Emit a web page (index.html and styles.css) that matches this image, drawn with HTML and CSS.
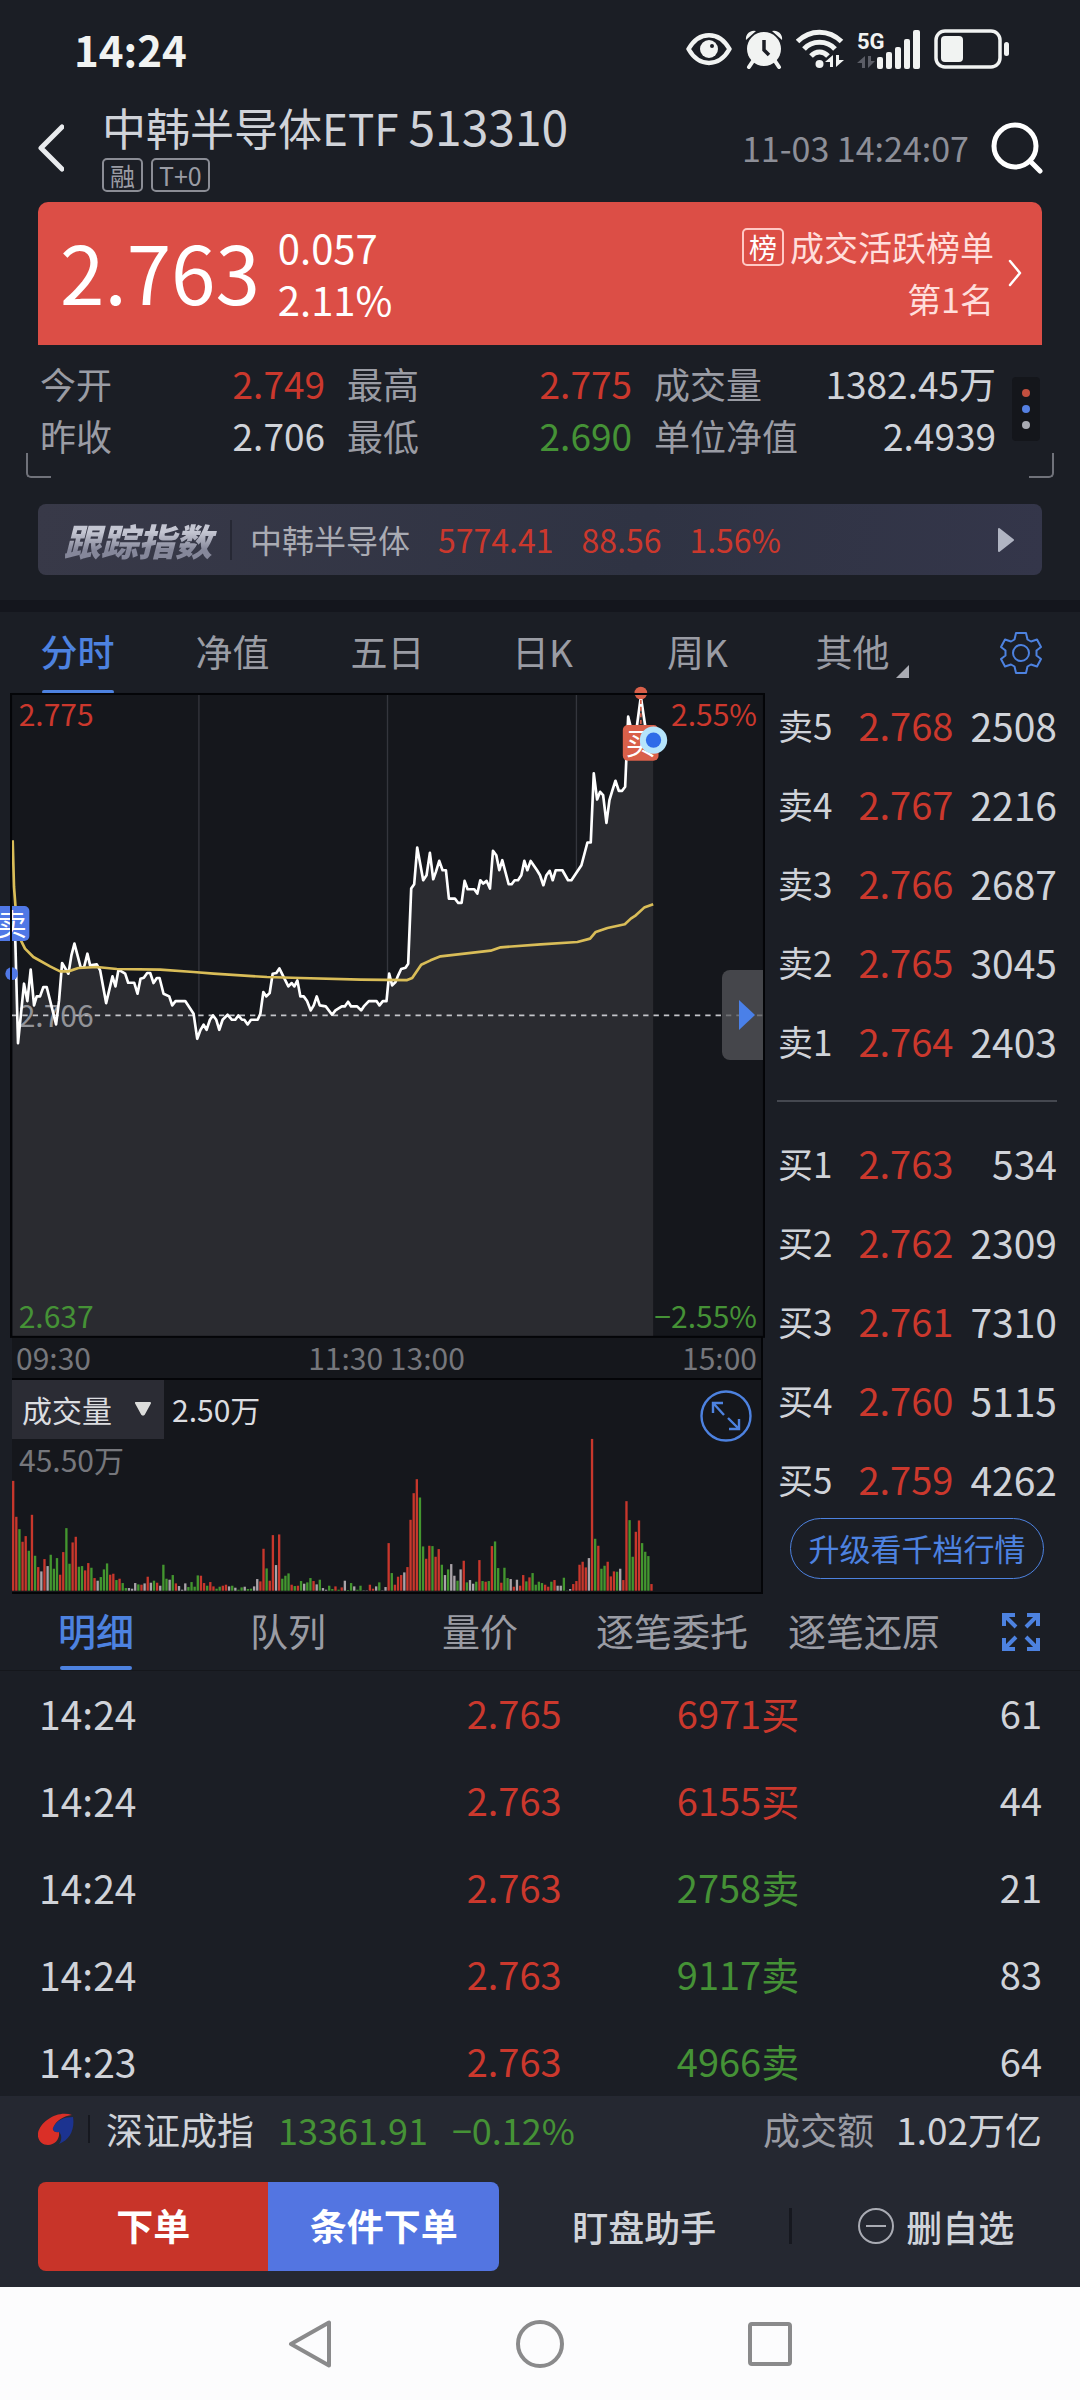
FILE: index.html
```
<!DOCTYPE html>
<html lang="zh-CN">
<head>
  <meta charset="UTF-8">
  <meta name="viewport" content="width=device-width, initial-scale=1">
  <title>中韩半导体ETF 513310</title>
  <link rel="stylesheet" href="styles.css">
</head>
<body>
  <div class="status-bar">
    <span class="clock">14:24</span>
    <div class="status-icons">
      <svg width="46" height="40" viewBox="0 0 46 40">
        <path d="M2.500 20C13 1.500 33 1.500 43.500 20C33 38.500 13 38.500 2.500 20Z" fill="none" stroke="#f1f3f2" stroke-width="4.500" stroke-linejoin="round"/>
        <circle cx="23" cy="20" r="9" fill="#f1f3f2"/>
        <circle cx="26" cy="17" r="2" fill="#1b1e25"/>
      </svg>
      <svg width="38" height="40" viewBox="0 0 38 40">
        <path d="M1 11A8 8 0 0 1 11 2ZM37 11A8 8 0 0 0 27 2Z" fill="#f1f3f2"/>
        <path d="M8 32L4 38M30 32L34 38" stroke="#f1f3f2" stroke-width="4" stroke-linecap="round"/>
        <circle cx="19" cy="20" r="17" fill="#f1f3f2"/>
        <path d="M19 11V21L24 26" fill="none" stroke="#1b1e25" stroke-width="3.500"/>
      </svg>
      <svg width="48" height="40" viewBox="0 0 48 40">
        <g fill="none" stroke="#f1f3f2" stroke-width="5">
          <path d="M1.500 12.500C14 0 33 0 45.500 12.500"/>
          <path d="M8 20C16 11 31 11 39 20"/>
          <path d="M15 27C20 21.500 27 21.500 32 27"/>
        </g>
        <circle cx="23.500" cy="35" r="4" fill="#f1f3f2"/>
        <path d="M37 38V26L29 33H34V38ZM40 26V38L48 31H43V26Z" fill="#f1f3f2"/>
      </svg>
      <svg width="64" height="40" viewBox="0 0 64 40">
        <text x="0" y="20" class="net-label">5G</text>
        <path d="M8 39V27L0 34H5V39ZM11 27V39L18 32H14V27Z" fill="#5b5d66"/>
        <g fill="#f1f3f2">
          <rect x="20" y="28" width="6" height="12" rx="2"/>
          <rect x="29" y="23" width="6" height="17" rx="2"/>
          <rect x="38" y="18" width="6" height="22" rx="2"/>
          <rect x="47" y="10" width="6" height="30" rx="2"/>
          <rect x="56" y="1" width="7" height="39" rx="2"/>
        </g>
      </svg>
      <svg width="76" height="40" viewBox="0 0 76 40">
        <rect x="2" y="2" width="64" height="36" rx="9" fill="none" stroke="#f1f3f2" stroke-width="3.500"/>
        <rect x="7" y="7" width="22" height="26" rx="4" fill="#f1f3f2"/>
        <rect x="70" y="13" width="5" height="14" rx="2.500" fill="#f1f3f2"/>
      </svg>
    </div>
  </div>

  <header class="header">
    <button class="icon-btn" aria-label="返回">
      <svg width="26" height="48" viewBox="0 0 26 48"><path d="M24 3L3 24L24 45" fill="none" stroke="#e9ebee" stroke-width="5" stroke-linecap="round" stroke-linejoin="round"/></svg>
    </button>
    <div class="heading">
      <h1>中韩半导体ETF <span class="code">513310</span></h1>
      <div class="tags">
        <span class="tag">融</span>
        <span class="tag">T+0</span>
      </div>
    </div>
    <time class="updated">11-03 14:24:07</time>
    <button class="icon-btn" aria-label="搜索">
      <svg width="52" height="52" viewBox="0 0 52 52"><g fill="none" stroke="#fff" stroke-width="5" stroke-linecap="round"><circle cx="24" cy="24" r="21"/><path d="M39 39L49 49"/></g></svg>
    </button>
  </header>

  <section class="quote">
    <div class="quote-price">2.763</div>
    <div class="quote-change">
      <div>0.057</div>
      <div>2.11%</div>
    </div>
    <a href="#rank" class="rank">
      <span class="rank-text">
        <span class="rank-line"><span class="rank-badge">榜</span>成交活跃榜单</span>
        <span class="rank-line">第1名</span>
      </span>
      <svg width="14" height="28" viewBox="0 0 14 28"><path d="M2 2L12 14L2 26" fill="none" stroke="#fff" stroke-width="2.500" stroke-linecap="round" stroke-linejoin="round"/></svg>
    </a>
  </section>

  <section class="stats">
    <dl class="stat-grid">
      <div class="stat"><dt>今开</dt><dd class="up">2.749</dd></div>
      <div class="stat"><dt>最高</dt><dd class="up">2.775</dd></div>
      <div class="stat"><dt>成交量</dt><dd>1382.45万</dd></div>
      <div class="stat"><dt>昨收</dt><dd>2.706</dd></div>
      <div class="stat"><dt>最低</dt><dd class="down">2.690</dd></div>
      <div class="stat"><dt>单位净值</dt><dd>2.4939</dd></div>
    </dl>
    <button class="more" aria-label="更多">
      <span class="dot dot-red"></span>
      <span class="dot dot-blue"></span>
      <span class="dot"></span>
    </button>
  </section>

  <a href="#index" class="index-bar">
    <span class="index-title">跟踪指数</span>
    <span class="index-name">中韩半导体</span>
    <span class="up">5774.41</span>
    <span class="up">88.56</span>
    <span class="up">1.56%</span>
    <svg class="index-arrow" width="16" height="24" viewBox="0 0 16 24"><path d="M1 1L15 12L1 23Z" fill="#b0b4c2" stroke="#b0b4c2" stroke-width="2" stroke-linejoin="round"/></svg>
  </a>

  <nav class="tabs chart-tabs">
    <button class="tab active">分时</button>
    <button class="tab">净值</button>
    <button class="tab">五日</button>
    <button class="tab">日K</button>
    <button class="tab">周K</button>
    <button class="tab tab-menu">其他</button>
    <button class="icon-btn tab-tool" aria-label="设置">
      <svg width="42" height="42" viewBox="0 0 42 42">
        <g fill="none" stroke="#4d82e0" stroke-width="2" stroke-linejoin="round">
          <path d="M16 1H26L27.500 7.500L31 9.500L37 7.500L41 15L36.500 18.500V23.500L41 27L37 34.500L31 32.500L27.500 34.500L26 41H16L14.500 34.500L11 32.500L5 34.500L1 27L5.500 23.500V18.500L1 15L5 7.500L11 9.500L14.500 7.500Z"/>
          <circle cx="21" cy="21" r="8"/>
        </g>
      </svg>
    </button>
  </nav>

  <main class="market">
    <div class="charts">
      <div class="price-chart">
        <svg class="price-svg" viewBox="36 42 2250 1926">
          <rect x="36" y="42" width="2250" height="1926" fill="#15171c"/>
          <path d="M596 42V1968M1161 42V1968M1727 42V1968" stroke="#34363d" stroke-width="4"/>
          <path id="priceArea" fill="#2a2b30"/>
          <path d="M36 1005H2286" stroke="#c4c5ca" stroke-width="5" stroke-dasharray="16 15"/>
          <text x="56" y="1040" class="chart-label flat">2.706</text>
          <path id="priceLine" class="line price-line"/>
          <path id="avgLine" class="line avg-line"/>
          <rect x="-18" y="677" width="106" height="105" rx="15" fill="#5078e6"/>
          <text x="35" y="764" class="mark-label">卖</text>
          <circle cx="35" cy="880" r="19" fill="#5078e6"/>
          <path d="M1920 60V136" stroke="#d9604a" stroke-width="5" stroke-dasharray="12 8"/>
          <circle cx="1920" cy="39" r="19" fill="#d9604a"/>
          <rect x="1866" y="135" width="107" height="107" rx="15" fill="#d9604a"/>
          <text x="1920" y="222" class="mark-label">买</text>
          <circle cx="1958" cy="180" r="41" fill="#b5e4fb"/>
          <circle cx="1958" cy="180" r="23" fill="#2f6be8"/>
          <rect x="33" y="42" width="2256" height="1926" fill="none" stroke="#040508" stroke-width="6"/>
          <text x="56" y="137" class="chart-label up">2.775</text>
          <text x="2268" y="137" class="chart-label up end">2.55%</text>
          <text x="56" y="1942" class="chart-label down">2.637</text>
          <text x="2268" y="1942" class="chart-label down end">−2.55%</text>
        </svg>
        <button class="drawer" aria-label="展开">
          <svg width="16" height="30" viewBox="0 0 16 30"><path d="M0 0L16 15L0 30Z" fill="#4a80e8"/></svg>
        </button>
      </div>
      <div class="time-axis">
        <span>09:30</span>
        <span>11:30 13:00</span>
        <span>15:00</span>
      </div>
      <div class="volume-chart">
        <svg class="volume-svg" viewBox="36 330 2250 636"></svg>
        <div class="volume-head">
          <button class="volume-pick">成交量
            <svg width="18" height="14" viewBox="0 0 18 14"><path d="M2 1H16L10 12Q9 13 8 12Z" fill="#dcdddb" stroke="#dcdddb" stroke-width="2" stroke-linejoin="round"/></svg>
          </button>
          <span>2.50万</span>
        </div>
        <div class="volume-max">45.50万</div>
        <button class="icon-btn zoom-btn" aria-label="放大">
          <svg width="52" height="52" viewBox="0 0 52 52"><g fill="none" stroke="#4d82e0" stroke-width="2.400"><circle cx="26" cy="26" r="24.500"/><path d="M24 25L14 14M13 23V13H23M28 28L39 39M39 29V39H29"/></g></svg>
        </button>
      </div>
    </div>

    <aside class="book">
      <table class="levels">
        <tr><th>卖5</th><td class="up">2.768</td><td>2508</td></tr>
        <tr><th>卖4</th><td class="up">2.767</td><td>2216</td></tr>
        <tr><th>卖3</th><td class="up">2.766</td><td>2687</td></tr>
        <tr><th>卖2</th><td class="up">2.765</td><td>3045</td></tr>
        <tr><th>卖1</th><td class="up">2.764</td><td>2403</td></tr>
      </table>
      <hr class="book-rule">
      <table class="levels">
        <tr><th>买1</th><td class="up">2.763</td><td>534</td></tr>
        <tr><th>买2</th><td class="up">2.762</td><td>2309</td></tr>
        <tr><th>买3</th><td class="up">2.761</td><td>7310</td></tr>
        <tr><th>买4</th><td class="up">2.760</td><td>5115</td></tr>
        <tr><th>买5</th><td class="up">2.759</td><td>4262</td></tr>
      </table>
      <button class="upgrade">升级看千档行情</button>
    </aside>
  </main>

  <nav class="tabs detail-tabs">
    <button class="tab active">明细</button>
    <button class="tab">队列</button>
    <button class="tab">量价</button>
    <button class="tab">逐笔委托</button>
    <button class="tab">逐笔还原</button>
    <button class="icon-btn tab-tool" aria-label="全屏">
      <svg width="38" height="38" viewBox="0 0 38 38"><path d="M14 14L2 2M2 13V2H13M24 14L36 2M25 2H36V13M14 24L2 36M2 25V36H13M24 24L36 36M36 25V36H25" fill="none" stroke="#4d82e0" stroke-width="4"/></svg>
    </button>
  </nav>

  <table class="trades">
    <tr><td>14:24</td><td class="up">2.765</td><td class="up">6971买</td><td>61</td></tr>
    <tr><td>14:24</td><td class="up">2.763</td><td class="up">6155买</td><td>44</td></tr>
    <tr><td>14:24</td><td class="up">2.763</td><td class="down">2758卖</td><td>21</td></tr>
    <tr><td>14:24</td><td class="up">2.763</td><td class="down">9117卖</td><td>83</td></tr>
    <tr><td>14:23</td><td class="up">2.763</td><td class="down">4966卖</td><td>64</td></tr>
  </table>

  <footer class="footer">
    <div class="market-index">
      <svg width="36" height="34" viewBox="0 0 36 34">
        <path d="M35 5C37 17 32 28 21 32C24 28 24 23 21 20C18 21 14 19 15 16C18 8 27 5 35 5Z" fill="#1c3390"/>
        <path d="M34 3C21-2 3 8 0 21C-1 28 4 33 10 33C17 33 22 27 21 20C18 21 14 19 15 16C18 8 26 4 34 3Z" fill="#da2f27"/>
      </svg>
      <span class="market-name">深证成指</span>
      <span class="down">13361.91</span>
      <span class="down">−0.12%</span>
      <span class="turnover"><span class="muted">成交额</span>1.02万亿</span>
    </div>
    <div class="actions">
      <div class="order-btns">
        <button class="order order-now">下单</button>
        <button class="order order-cond">条件下单</button>
      </div>
      <button class="action">盯盘助手</button>
      <button class="action action-remove">
        <svg width="36" height="36" viewBox="0 0 36 36"><g fill="none" stroke="#a9abb3" stroke-width="2"><circle cx="18" cy="18" r="17"/><path d="M8 18H28"/></g></svg>
        删自选
      </button>
    </div>
  </footer>

  <div class="system-nav">
    <button class="icon-btn" aria-label="系统返回"><svg width="48" height="48" viewBox="0 0 48 48"><path d="M43 2.500V45.500L5 24Z" fill="none" stroke="#8a8a8b" stroke-width="4" stroke-linejoin="round"/></svg></button>
    <button class="icon-btn" aria-label="主屏幕"><svg width="48" height="48" viewBox="0 0 48 48"><circle cx="24" cy="24" r="22" fill="none" stroke="#8a8a8b" stroke-width="4"/></svg></button>
    <button class="icon-btn" aria-label="最近任务"><svg width="48" height="48" viewBox="0 0 48 48"><rect x="4" y="4" width="40" height="40" rx="2" fill="none" stroke="#8a8a8b" stroke-width="4"/></svg></button>
  </div>

  <script src="chart.js"></script>
</body>
</html>
```
FILE: styles.css
```
* {
  box-sizing: border-box;
}
body {
  margin: 0;
  background: #1b1e25;
  color: #d0d3d9;
  font-family: "Noto Sans CJK SC", sans-serif;
  font-size: 36px;
  line-height: 50px;
}
button {
  padding: 0;
  border: none;
  background: none;
  color: inherit;
  font: inherit;
  cursor: pointer;
}
a {
  color: inherit;
  text-decoration: none;
}
svg {
  display: block;
}
table {
  width: 100%;
  border-collapse: collapse;
  table-layout: fixed;
}
.up {
  color: #cb382d;
  fill: #cb382d;
}
.down {
  color: #459236;
  fill: #459236;
}
.muted {
  color: #9a9ca4;
}

/* status bar */
.status-bar {
  display: flex;
  justify-content: space-between;
  align-items: center;
  padding: 24px 70px 0 74px;
}
.clock {
  color: #f1f3f2;
  font-size: 42px;
  font-weight: 700;
}
.status-icons {
  display: flex;
  gap: 13px;
}
.net-label {
  fill: #f1f3f2;
  font-family: Roboto, sans-serif;
  font-size: 22px;
  font-weight: 700;
}

/* header */
.header {
  display: flex;
  align-items: center;
  padding: 29px 37px 10px 38px;
}
.heading {
  flex: 1;
  margin-left: 38px;
}
h1 {
  margin: 0;
  font-size: 44px;
  font-weight: 400;
  line-height: 48px;
}
.code {
  font-size: 48px;
  line-height: 40px;
}
.tags {
  display: flex;
  gap: 8px;
  margin-top: 7px;
}
.tag {
  padding: 0 6px;
  border: 2px solid #8b8d95;
  border-radius: 5px;
  color: #9a9ca4;
  font-size: 25px;
  line-height: 30px;
}
.updated {
  margin-right: 22px;
  color: #8d8f98;
  font-size: 34px;
}

/* quote card */
.quote {
  display: flex;
  gap: 18px;
  margin: 0 38px;
  padding: 19px 20px 20px 22px;
  border-radius: 10px 10px 0 0;
  background: #dc4e46;
  color: #fff;
  line-height: 52px;
}
.quote-price {
  font-size: 80px;
  line-height: 98px;
}
.quote-change {
  flex: 1;
  font-size: 40px;
}
.rank {
  display: flex;
  align-items: center;
  gap: 14px;
  color: #ffdedb;
  font-size: 34px;
}
.rank-line {
  display: flex;
  justify-content: flex-end;
  align-items: center;
}
.rank-badge {
  margin-right: 6px;
  padding: 0 5px;
  border: 2px solid #ffc9c5;
  border-radius: 5px;
  color: #fff;
  font-size: 28px;
  line-height: 34px;
}

/* stats */
.stats {
  position: relative;
  display: flex;
  gap: 16px;
  margin: 0 26px;
  padding: 12px 14px 17px;
  line-height: 52px;
}
.stats::before,
.stats::after {
  content: "";
  position: absolute;
  bottom: 0;
  width: 23px;
  height: 23px;
  border: 2px solid #70727a;
  border-top: none;
}
.stats::before {
  left: 0;
  border-right: none;
  border-bottom-left-radius: 5px;
}
.stats::after {
  right: 0;
  border-left: none;
  border-bottom-right-radius: 5px;
}
.stat-grid {
  flex: 1;
  display: grid;
  grid-template-columns: 5fr 5fr 6fr;
  column-gap: 22px;
  margin: 0;
}
.stat {
  display: flex;
  justify-content: space-between;
}
.stat dt {
  color: #9a9ca4;
}
.stat dd {
  margin: 0;
  font-size: 37px;
}
.more {
  display: flex;
  flex-direction: column;
  justify-content: center;
  align-items: center;
  align-self: center;
  gap: 8px;
  width: 28px;
  height: 64px;
  border-radius: 4px;
  background: #14161b;
}
.dot {
  width: 8px;
  height: 8px;
  border-radius: 50%;
  background: #a9abb3;
}
.dot-red {
  background: #c24f3f;
}
.dot-blue {
  background: #5580e2;
}

/* tracked index */
.index-bar {
  display: flex;
  align-items: center;
  gap: 28px;
  margin: 26px 38px 25px;
  padding: 12px 28px 12px 26px;
  border-radius: 8px;
  background: linear-gradient(100deg, #383948, #2f3343 60%, #34364a);
  font-size: 32px;
  line-height: 47px;
}
.index-title {
  padding-right: 18px;
  border-right: 2px solid #262834;
  background: linear-gradient(#c4c6d2 30%, #85879a 75%);
  background-clip: text;
  -webkit-background-clip: text;
  color: transparent;
  font-size: 37px;
  font-style: italic;
  font-weight: 900;
  line-height: 40px;
}
.index-name {
  margin-left: -10px;
  color: #a9abb3;
}
.index-arrow {
  margin-left: auto;
}

/* tabs */
.tabs {
  display: flex;
}
.tab {
  position: relative;
  flex: 1;
  color: #9a9ca4;
}
.active {
  color: #4d82e0;
  font-weight: 500;
}
.active::after {
  content: "";
  position: absolute;
  bottom: 0;
  left: 50%;
  width: 72px;
  height: 4px;
  margin-left: -36px;
  border-radius: 2px;
  background: #4d82e0;
}
.tab-tool {
  display: flex;
  justify-content: flex-end;
  align-items: center;
}
.chart-tabs {
  padding-right: 38px;
  border-top: 12px solid #14161d;
}
.chart-tabs .tab {
  padding: 14px 0 18px;
  font-size: 37px;
}
.chart-tabs .tab-tool {
  width: 112px;
}
.tab-menu::after {
  content: "";
  position: absolute;
  bottom: 16px;
  left: 50%;
  margin-left: 43px;
  border-bottom: 13px solid #a9abb3;
  border-left: 13px solid transparent;
}

/* charts + order book */
.market {
  display: grid;
  grid-template-columns: minmax(0, 1fr) 280px;
  gap: 14px;
  padding: 0 23px 0 12px;
}
.price-chart {
  position: relative;
}
.price-svg {
  width: 100%;
  overflow: visible;
}
.line {
  fill: none;
  stroke-linejoin: round;
}
.price-line {
  stroke: #fff;
  stroke-width: 8px;
}
.avg-line {
  stroke: #d9bd58;
  stroke-width: 8px;
}
.chart-label {
  font-size: 90px;
}
.flat {
  fill: #929398;
}
.end {
  text-anchor: end;
}
.mark-label {
  fill: #fff;
  font-size: 90px;
  text-anchor: middle;
}
.drawer {
  position: absolute;
  top: 50%;
  right: 0;
  display: flex;
  justify-content: center;
  align-items: center;
  width: 41px;
  height: 90px;
  margin-top: -45px;
  padding-left: 8px;
  border-radius: 8px 0 0 8px;
  background: #55565ac0;
}
.time-axis {
  display: flex;
  justify-content: space-between;
  padding: 0 4px;
  border: 2px solid #040508;
  border-top: none;
  border-left: none;
  background: #15171c;
  color: #76777c;
  font-size: 30px;
  line-height: 41px;
}
.volume-chart {
  position: relative;
  border-right: 2px solid #040508;
  border-bottom: 2px solid #040508;
  background: #15171c;
  font-size: 30px;
}
.volume-svg {
  width: 100%;
}
.volume-head {
  position: absolute;
  top: 0;
  left: 0;
  display: flex;
  align-items: center;
  gap: 8px;
  color: #dcdde0;
}
.volume-pick {
  display: flex;
  align-items: center;
  gap: 22px;
  padding: 4px 12px 5px 10px;
  background: #2b2c34;
}
.volume-max {
  position: absolute;
  top: 54px;
  left: 7px;
  color: #76777c;
}
.zoom-btn {
  position: absolute;
  top: 10px;
  right: 9px;
}
.book {
  padding-top: 6px;
}
.levels th {
  width: 26%;
  padding: 0 0 29px 1px;
  font-size: 35px;
  font-weight: 400;
  text-align: left;
  white-space: nowrap;
}
.levels td {
  padding: 0 0 29px;
  font-size: 39px;
  text-align: right;
}
.levels .up {
  font-size: 38px;
}
.levels tr:last-child > * {
  padding-bottom: 14px;
}
.book-rule {
  height: 2px;
  margin: 20px 0 36px;
  border: none;
  background: #454850;
}
.upgrade {
  display: block;
  width: 254px;
  margin: 0 auto;
  padding: 7px 0 9px;
  border: 1px solid #4d82e0;
  border-radius: 31px;
  color: #4d82e0;
  font-size: 31px;
  line-height: 43px;
}

/* trade details */
.detail-tabs {
  padding: 0 40px 0 0;
  border-bottom: 1px solid #15171c;
}
.detail-tabs .tab {
  padding: 11px 0 15px;
  font-size: 38px;
}
.detail-tabs .tab-tool {
  width: 80px;
}
.trades td {
  padding: 17px 0 20px;
  font-size: 38px;
  text-align: right;
}
.trades td:first-child {
  width: 22%;
  padding-left: 39px;
  font-size: 39px;
  text-align: left;
}
.trades td:nth-child(2) {
  width: 30%;
}
.trades td:nth-child(3) {
  width: 22%;
}
.trades td:last-child {
  padding-right: 38px;
}
.trades tr:last-child td {
  padding-bottom: 10px;
}

/* footer */
.footer {
  padding: 8px 0 16px 38px;
  background: #252831;
}
.market-index {
  display: flex;
  align-items: center;
  padding-right: 38px;
  gap: 24px;
}
.market-name {
  margin-left: -10px;
  padding-left: 16px;
  border-left: 2px solid #16181f;
  font-size: 37px;
  line-height: 28px;
}
.turnover {
  display: flex;
  gap: 22px;
  margin-left: auto;
  font-size: 37px;
}
.actions {
  display: grid;
  grid-template-columns: 46fr 29fr 29fr;
  align-items: center;
  margin-top: 28px;
}
.order-btns {
  display: flex;
  overflow: hidden;
  border-radius: 8px;
}
.order {
  flex: 1;
  padding: 18px 0 21px;
  color: #fff;
  font-size: 37px;
  font-weight: 700;
}
.order-now {
  background: #c83429;
}
.order-cond {
  background: #5375e1;
}
.action {
  font-weight: 500;
  line-height: 36px;
}
.action-remove {
  display: flex;
  justify-content: center;
  align-items: center;
  gap: 12px;
  border-left: 3px solid #16181f;
}
.system-nav {
  display: flex;
  justify-content: center;
  gap: 182px;
  padding: 33px 0;
  background: #fcfcfd;
}
```
FILE: chart.js
```
// minute prices, x,y pairs in viewBox units
const prices = '38,700 46,785 54,1088 72,910 82,962 92,868 102,975 110,948 120,948 130,920 140,920 168,1032 177,960 186,848 205,880 214,825 223,790 242,862 252,860 262,820 270,855 290,852 300,870 318,968 337,888 346,918 355,868 375,880 384,907 402,907 412,940 421,895 431,892 441,878 450,878 460,908 470,893 478,893 490,940 507,948 516,975 526,962 555,962 580,1000 591,1075 600,1050 610,1033 619,1048 629,1018 638,1005 648,1018 657,1048 667,1018 682,1003 695,1018 705,1018 714,1005 725,1018 732,1018 742,1032 752,1018 772,1018 780,1000 789,935 798,948 808,938 817,880 828,878 837,864 850,890 864,918 874,908 882,918 891,900 900,948 910,948 920,962 931,990 940,975 949,948 958,975 976,978 995,1003 1005,990 1024,978 1033,978 1043,964 1052,978 1070,978 1082,990 1090,978 1105,962 1128,962 1137,975 1147,962 1158,962 1166,880 1175,915 1185,905 1193,885 1202,866 1215,862 1223,850 1232,625 1241,612 1250,502 1268,600 1278,585 1288,518 1298,597 1306,575 1316,542 1326,570 1336,570 1345,655 1363,655 1373,668 1383,668 1392,602 1401,627 1421,627 1430,640 1439,600 1448,610 1458,602 1468,625 1477,512 1487,525 1496,570 1505,540 1524,612 1533,612 1542,600 1552,600 1562,585 1571,542 1580,570 1590,542 1609,570 1618,585 1628,615 1637,585 1647,572 1656,600 1665,570 1685,570 1702,600 1712,600 1742,555 1760,487 1770,487 1779,280 1789,358 1798,335 1807,345 1817,428 1826,360 1835,330 1844,302 1854,332 1864,332 1873,320 1882,110 1892,150 1908,140 1920,50 1935,150 1957,180';

const average = '38,480 42,620 48,700 60,775 75,805 100,830 150,858 180,873 205,873 235,863 290,860 350,866 480,868 580,875 640,880 800,890 900,893 1080,898 1220,899 1235,893 1262,853 1290,840 1320,828 1470,811 1500,801 1620,792 1730,785 1768,775 1785,755 1820,743 1872,732 1890,715 1905,705 1930,682 1957,672';

// one bar a minute: r = up, g = down, w = flat
const volumes = 'r330 r222 g185 r147 r164 g120 r228 g105 r71 w58 r95 w74 g108 g66 g98 r48 r116 g188 g81 r145 r162 g72 g74 r61 r83 g69 r38 w30 g41 g64 g82 r48 r51 g32 r36 g23 g8 w8 w6 w23 g19 r18 w22 r42 w24 g30 r24 w15 g78 g36 w33 g47 r22 w14 w3 w22 g11 g26 g12 g46 r45 r23 g15 r26 r13 g6 g12 r15 r18 w13 g15 w9 g3 g10 w12 g5 g6 w13 w35 r28 r126 g67 r30 r167 w77 r169 g36 g45 g52 r18 g14 r15 g29 w21 g25 g38 r29 w19 g33 w8 w3 g15 g5 r13 g3 r10 w30 g2 g23 w13 g3 g15 w1 w1 r18 r6 w13 g25 w1 w11 r143 g53 r18 r42 r47 w55 r71 r213 r293 r335 g280 g133 r96 r135 g134 r102 r125 g78 w47 g64 w80 w45 g30 w64 r90 g25 w32 w21 g27 r92 g29 r27 g29 r134 g148 g68 r24 g69 g38 w35 r12 w33 r15 r47 g28 r40 g53 g18 g27 g23 r18 r12 g27 r32 w15 w15 g39 g1 w5 r20 r29 r78 r87 r70 w98 r456 g156 r135 g66 g75 r87 r43 r58 g57 w66 r32 r269 g212 g102 r177 r211 g143 g117 g104 r20';

document.getElementById('priceLine').setAttribute('d', 'M' + prices);
document.getElementById('priceArea').setAttribute('d', 'M' + prices + ' V1968 H38 Z');
document.getElementById('avgLine').setAttribute('d', 'M' + average);

const colors = { r: '#c8372c', g: '#43962f', w: '#a9a3a8' };
const volumeSvg = document.querySelector('.volume-svg');

volumes.split(' ').forEach((item, i) => {
  const height = Number(item.slice(1));
  const bar = document.createElementNS('http://www.w3.org/2000/svg', 'rect');
  bar.setAttribute('x', 36 + i * 9.4);
  bar.setAttribute('y', 963 - height);
  bar.setAttribute('width', 7);
  bar.setAttribute('height', height);
  bar.setAttribute('fill', colors[item[0]]);
  volumeSvg.appendChild(bar);
});
```
